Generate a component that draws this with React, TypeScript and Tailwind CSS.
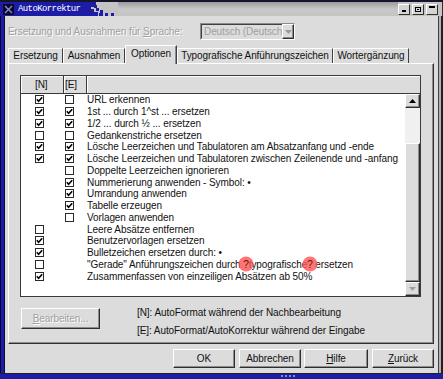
import React from "react";

type Row = [boolean | null, boolean | null, React.ReactNode];

function Q() {
  return (
    <span className="relative inline-block">
      <span className="absolute left-1/2 top-1/2 -translate-x-1/2 -translate-y-1/2 w-[15px] h-[15px] rounded-full bg-[#ff5252]/80"></span>
      <span className="relative text-[#5a1010]">?</span>
    </span>
  );
}

const rows: Row[] = [
  [true, false, "URL erkennen"],
  [true, true, "1st ... durch 1^st ... ersetzen"],
  [true, true, "1/2 ... durch ½ ... ersetzen"],
  [false, false, "Gedankenstriche ersetzen"],
  [true, true, "Lösche Leerzeichen und Tabulatoren am Absatzanfang und -ende"],
  [true, true, "Lösche Leerzeichen und Tabulatoren zwischen Zeilenende und -anfang"],
  [null, false, "Doppelte Leerzeichen ignorieren"],
  [null, true, "Nummerierung anwenden - Symbol: •"],
  [null, true, "Umrandung anwenden"],
  [null, true, "Tabelle erzeugen"],
  [null, false, "Vorlagen anwenden"],
  [false, null, "Leere Absätze entfernen"],
  [true, null, "Benutzervorlagen ersetzen"],
  [true, null, "Bulletzeichen ersetzen durch: •"],
  [
    false,
    null,
    <>
      "Gerade" Anführungszeichen durch <Q />typografische<Q /> ersetzen
    </>,
  ],
  [true, null, "Zusammenfassen von einzeiligen Absätzen ab 50%"],
];

function Check({ checked }: { checked: boolean }) {
  return (
    <svg width="9" height="9" viewBox="0 0 9 9" className="block">
      <rect x="0.5" y="0.5" width="8" height="8" fill="white" stroke="#2a2a2a" />
      {checked && (
        <path d="M1.8 4.2 L3.6 6.2 L7.2 2.2" fill="none" stroke="#000" strokeWidth="1.6" />
      )}
    </svg>
  );
}

const raised =
  "border border-t-white border-l-white border-r-[#2e2e2e] border-b-[#2e2e2e] shadow-[inset_-1px_-1px_0_#8c8c8c]";

function Btn({
  w,
  children,
  disabled,
}: {
  w: string;
  children: React.ReactNode;
  disabled?: boolean;
}) {
  return (
    <div
      className={`${w} h-full flex items-center justify-center ${raised} ${
        disabled ? "text-[#a0a0a0] [text-shadow:1px_1px_0_#ffffff]" : "text-[#111111]"
      }`}
    >
      {children}
    </div>
  );
}

function TitleBtn({ kind }: { kind: number }) {
  return (
    <div className="w-[12px] h-[11px] bg-[#d4d4d4] border border-t-white border-l-white border-r-[#303030] border-b-[#303030] flex items-center justify-center">
      <svg width="8" height="7" viewBox="0 0 8 7">
        {kind === 0 && <rect x="2" y="4" width="4" height="2" fill="#000" />}
        {kind === 1 && (
          <>
            <rect x="1.5" y="1.5" width="5" height="4" fill="none" stroke="#000" />
            <rect x="3" y="3" width="2" height="1" fill="#000" />
          </>
        )}
        {kind === 2 && <rect x="1" y="0" width="6" height="2" fill="#000" />}
      </svg>
    </div>
  );
}

function Tab({ w, label, active }: { w: string; label: string; active?: boolean }) {
  return (
    <div
      className={`${w} flex items-center justify-center whitespace-nowrap border-t border-l border-t-white border-l-white border-r border-r-[#404040] ${
        active
          ? "h-[19px] -mb-px relative z-10 bg-[#dcdcdc] pb-[2px] shadow-[inset_-1px_0_0_#8c8c8c]"
          : "h-[15px]"
      }`}
    >
      {label}
    </div>
  );
}

export default function App() {
  return (
    <div className="w-[443px] h-[379px] flex flex-col overflow-hidden bg-[#dcdcdc] font-['Liberation_Sans',Arial,sans-serif] text-[10px] leading-[12px] tracking-[-0.08px] text-[#111111]">
      {/* title bar */}
      <div className="h-[16px] shrink-0 flex border-t-2 border-t-[#14142a]">
        <div className="w-[88px] h-full bg-[#1c1ca6] flex items-center pl-[3px]">
          <svg width="11" height="11" viewBox="0 0 11 11" className="block">
            <rect x="0" y="0" width="11" height="11" fill="#0a0a28" />
            <path d="M2 2 L9 9 M9 2 L2 9" stroke="#8c8cd0" strokeWidth="1.4" />
          </svg>
          <span className="ml-[4px] text-white font-['Liberation_Mono',monospace] text-[9px] tracking-[-0.6px] leading-[12px]">
            AutoKorrektur
          </span>
        </div>
        <svg width="30" height="14" viewBox="0 0 30 14" className="block bg-[#c4c4c4]">
          <rect x="0" y="0" width="3" height="14" fill="#1c1ca6" />
          <rect x="3" y="0" width="5" height="5" fill="#1c1ca6" />
          <rect x="3" y="7" width="3" height="7" fill="#1c1ca6" />
          <rect x="6" y="3" width="3" height="3" fill="#1c1ca6" />
          <rect x="8" y="6" width="3" height="3" fill="#1c1ca6" />
          <rect x="6" y="10" width="4" height="4" fill="#1c1ca6" />
          <rect x="12" y="8" width="3" height="3" fill="#1c1ca6" />
          <rect x="11" y="11" width="4" height="3" fill="#1c1ca6" />
          <rect x="17" y="11" width="3" height="3" fill="#1c1ca6" />
          <rect x="23" y="11" width="3" height="3" fill="#1c1ca6" />
        </svg>
        <div className="flex-1 h-full bg-gradient-to-b from-[#9a9a9a] via-[#c8c8c8] to-[#c4c4c4]"></div>
        <div className="h-full flex items-center gap-[2px] pr-[4px] bg-[#c4c4c4]">
          <TitleBtn kind={0} />
          <TitleBtn kind={1} />
          <TitleBtn kind={2} />
        </div>
        <div className="w-[1px] h-full bg-[#303030]"></div>
      </div>

      {/* middle */}
      <div className="flex-1 flex min-h-0">
        <div className="w-[5px] h-full bg-[#1c1ca6] border-l border-l-[#06063a] border-r border-r-[#0a0a40]"></div>

        <div className="flex-1 flex flex-col">
          {/* language row */}
          <div className="mt-[7px] h-[17px] flex items-center pl-[3px]">
            <div className="w-[192px] text-[#a0a0a0] [text-shadow:1px_1px_0_#ffffff]">
              Ersetzung und Ausnahmen für <span className="underline">S</span>prache:
            </div>
            <div className="w-[95px] h-full flex border border-t-[#8c8c8c] border-l-[#8c8c8c] border-b-white border-r-white">
              <div className="flex-1 overflow-hidden whitespace-nowrap pl-[2px] flex items-center text-[#a0a0a0] border border-t-[#404040] border-l-[#404040] border-b-[#dcdcdc] border-r-0">
                Deutsch (Deutschland)
              </div>
              <div className={`w-[12px] h-full flex items-center justify-center ${raised}`}>
                <svg width="7" height="4" viewBox="0 0 7 4">
                  <path d="M0 0 H7 L3.5 4 Z" fill="#9a9a9a" />
                </svg>
              </div>
            </div>
          </div>

          {/* tabs */}
          <div className="mt-[5px] h-[18px] flex items-end pl-[3px]">
            <Tab w="w-[55px]" label="Ersetzung" />
            <Tab w="w-[62px]" label="Ausnahmen" />
            <Tab w="w-[52px]" label="Optionen" active />
            <Tab w="w-[156px]" label="Typografische Anführungszeichen" />
            <Tab w="w-[76px]" label="Wortergänzung" />
          </div>

          {/* panel */}
          <div className="ml-[3px] w-[426px] h-[281px] border border-t-white border-l-white border-r-[#303030] border-b-[#303030] shadow-[inset_-1px_-1px_0_#8c8c8c] pt-[11px] pl-[11px] flex flex-col">
            {/* list */}
            <div className="w-[401px] h-[222px] border border-[#3a3a3a] bg-white flex flex-col">
              <div className="h-[18px] shrink-0 flex bg-[#dcdcdc] border-b border-b-[#3a3a3a]">
                <div className="w-[43px] h-full border-r border-r-[#3a3a3a] shadow-[inset_1px_1px_0_#ffffff] pl-[14px] flex items-center">
                  [N]
                </div>
                <div className="w-[23px] h-full border-r border-r-[#3a3a3a] shadow-[inset_1px_1px_0_#ffffff] pl-[1px] flex items-center">
                  [E]
                </div>
                <div className="flex-1 h-full shadow-[inset_1px_1px_0_#ffffff]"></div>
              </div>
              <div className="flex-1 flex min-h-0">
                <div className="flex-1 flex flex-col">
                  {rows.map((r, i) => (
                    <div key={i} className="h-[11.75px] shrink-0 flex items-center whitespace-nowrap">
                      <div className="w-[44px] pl-[14px]">
                        {r[0] !== null && <Check checked={r[0]} />}
                      </div>
                      <div className="w-[22px]">{r[1] !== null && <Check checked={r[1]} />}</div>
                      <div className="leading-[11px]">{r[2]}</div>
                    </div>
                  ))}
                </div>
                <div className="w-[15px] h-full flex flex-col">
                  <div className={`h-[14px] bg-[#dcdcdc] flex items-center justify-center ${raised}`}>
                    <svg width="7" height="4" viewBox="0 0 7 4">
                      <path d="M3.5 0 L7 4 H0 Z" fill="#000" />
                    </svg>
                  </div>
                  <div className="h-[35px] bg-[#f0f0f0]"></div>
                  <div className={`h-[139px] bg-[#dcdcdc] ${raised}`}></div>
                  <div className={`h-[14px] bg-[#dcdcdc] flex items-center justify-center ${raised}`}>
                    <svg width="7" height="4" viewBox="0 0 7 4">
                      <path d="M0 0 H7 L3.5 4 Z" fill="#a0a0a0" />
                    </svg>
                  </div>
                </div>
              </div>
            </div>

            {/* bottom of panel */}
            <div className="mt-[11px] flex">
              <div className="ml-[1px] h-[21px]">
                <Btn w="w-[79px]" disabled>
                  <span>
                    <span className="underline">B</span>earbeiten...
                  </span>
                </Btn>
              </div>
              <div className="ml-[37px] -mt-[2px] flex flex-col gap-[5px] leading-[13px]">
                <div>[N]: AutoFormat während der Nachbearbeitung</div>
                <div>[E]: AutoFormat/AutoKorrektur während der Eingabe</div>
              </div>
            </div>
          </div>

          {/* buttons */}
          <div className="mt-[5px] h-[19px] flex justify-end pr-[4px]">
            <Btn w="w-[62px]">OK</Btn>
            <div className="ml-[4px] h-full">
              <Btn w="w-[62px]">Abbrechen</Btn>
            </div>
            <div className="ml-[3px] h-full">
              <Btn w="w-[64px]">
                <span>
                  <span className="underline">H</span>ilfe
                </span>
              </Btn>
            </div>
            <div className="ml-[4px] h-full">
              <Btn w="w-[62px]">
                <span>
                  <span className="underline">Z</span>urück
                </span>
              </Btn>
            </div>
          </div>
        </div>

        <div className="w-[5px] h-full flex">
          <div className="w-[1px] bg-[#404040]"></div>
          <div className="w-[2px] bg-[#b4b4b4]"></div>
          <div className="w-[2px] bg-[#202020]"></div>
        </div>
      </div>

      {/* bottom frame */}
      <div className="h-[6px] shrink-0 flex flex-col">
        <div className="h-[1px] bg-[#202020]"></div>
        <div className="flex-1 bg-[#1c1ca6] flex items-start pl-[281px] pt-[1px] gap-[2px]">
          <div className="w-[2px] h-[2px] bg-[#8c8cd0]"></div>
          <div className="w-[2px] h-[2px] bg-[#8c8cd0]"></div>
          <div className="w-[2px] h-[2px] bg-[#8c8cd0]"></div>
          <div className="w-[2px] h-[2px] bg-[#8c8cd0]"></div>
        </div>
      </div>
    </div>
  );
}
